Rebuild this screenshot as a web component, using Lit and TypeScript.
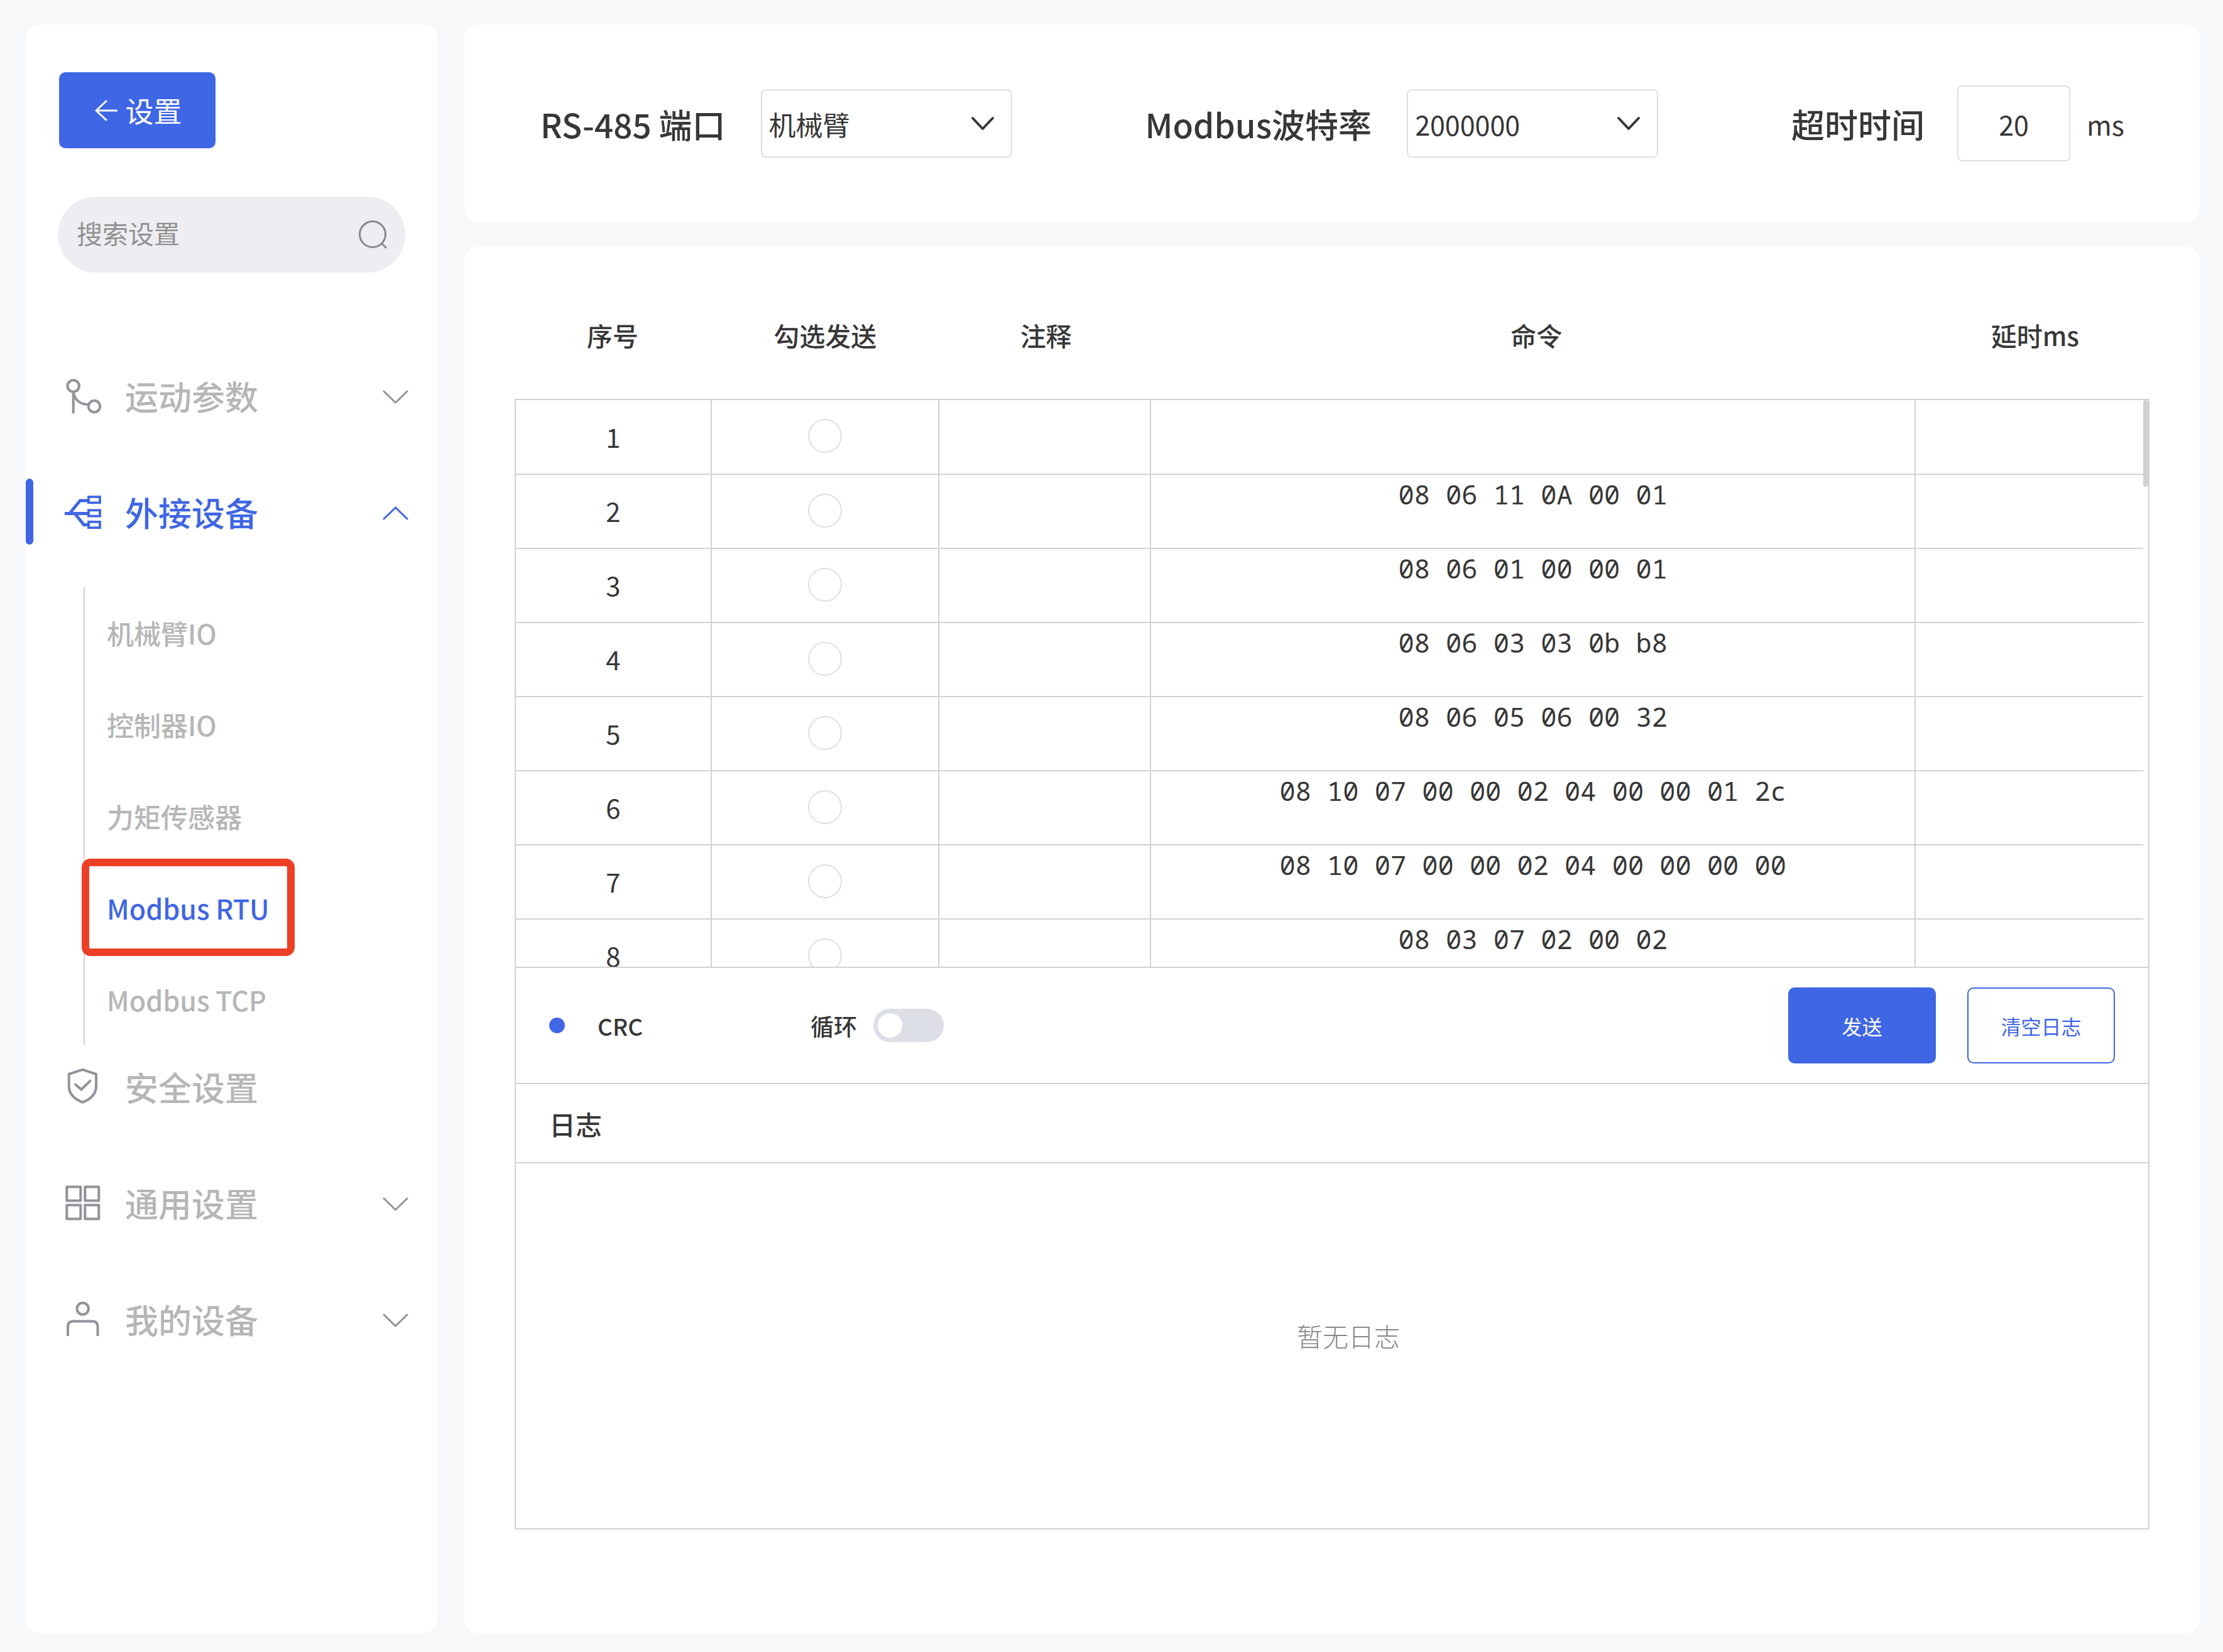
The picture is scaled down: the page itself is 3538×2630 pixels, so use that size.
import { LitElement, html, css, svg, nothing } from "lit";
import { customElement, property } from "lit/decorators.js";
import { classMap } from "lit/directives/class-map.js";

const ICONS: Record<string, unknown> = {
  motion: svg`<g fill="none" stroke="currentColor" stroke-width="4" stroke-linecap="round">
    <circle cx="12.7" cy="12.5" r="9.2"/><circle cx="46" cy="45" r="9.2"/>
    <path d="M12.7 22V54.500M13 24C16 36 25 42 36 42"/></g>`,
  device: svg`<g fill="none" stroke="currentColor">
    <path stroke-width="5" d="M-1 30.500H36M7.500 29.500 23.500 10H36M15.500 31 29.500 48.500H36"/>
    <g stroke-width="3.800"><rect x="37" y="4" width="18" height="9.300"/><rect x="37" y="25.300" width="18" height="9.300"/><rect x="37" y="43.800" width="18" height="9.300"/></g></g>`,
  shield: svg`<g fill="none" stroke="currentColor" stroke-width="4" stroke-linejoin="round">
    <path d="M27.500 0.800 49 8V27C49 40 40 48 27.500 52.800C15 48 5.700 40 5.700 27V8Z"/>
    <path stroke-linecap="round" stroke-linejoin="miter" d="M16 24.500 25.500 32.500 39.300 18.800"/></g>`,
  grid: svg`<g fill="none" stroke="currentColor" stroke-width="4" stroke-linejoin="round">
    <rect x="2.300" y="2.500" width="22" height="22"/><rect x="31.300" y="2.500" width="22" height="22"/>
    <rect x="2.300" y="31.500" width="22" height="22"/><rect x="31.300" y="31.500" width="22" height="22"/></g>`,
  user: svg`<g fill="none" stroke="currentColor" stroke-width="4">
    <circle cx="27.700" cy="11.500" r="9.200"/><path d="M4 55V40Q4 31.500 12.500 31.500H43Q51.500 31.500 51.500 40V55"/></g>`,
};

interface MenuEntry {
  label: string;
  icon: string;
  chevron?: "up" | "down";
  children?: string[];
}

const MENU: MenuEntry[] = [
  { label: "运动参数", icon: "motion", chevron: "down" },
  {
    label: "外接设备",
    icon: "device",
    chevron: "up",
    children: ["机械臂IO", "控制器IO", "力矩传感器", "Modbus RTU", "Modbus TCP"],
  },
  { label: "安全设置", icon: "shield" },
  { label: "通用设置", icon: "grid", chevron: "down" },
  { label: "我的设备", icon: "user", chevron: "down" },
];

const COMMANDS = [
  "",
  "08 06 11 0A 00 01",
  "08 06 01 00 00 01",
  "08 06 03 03 0b b8",
  "08 06 05 06 00 32",
  "08 10 07 00 00 02 04 00 00 01 2c",
  "08 10 07 00 00 02 04 00 00 00 00",
  "08 03 07 02 00 02",
];

const base = css`
  :host {
    display: block;
    font-family: "Noto Sans CJK SC", sans-serif;
    color: #373737;
  }
  *,
  *::before,
  *::after {
    box-sizing: border-box;
  }
  button,
  input,
  select,
  textarea {
    font: inherit;
    color: inherit;
    margin: 0;
    padding: 0;
    border: 0;
    background: none;
    outline: 0;
    appearance: none;
  }
`;

@customElement("settings-menu")
export class SettingsMenu extends LitElement {
  @property() group = "外接设备";
  @property() current = "Modbus RTU";

  static styles = [
    base,
    css`
      :host {
        background: #fff;
        border-radius: 22px;
        padding: 76px 0;
      }
      .back {
        display: flex;
        align-items: center;
        justify-content: center;
        gap: 12px;
        width: 249px;
        height: 121px;
        margin-left: 53px;
        padding-left: 4px;
        border-radius: 10px;
        background: #3f66e4;
        color: #fff;
        font-size: 45px;
      }
      .search {
        display: flex;
        align-items: center;
        height: 121px;
        margin: 77px 51px 143px;
        padding: 0 27px 0 30px;
        border-radius: 61px;
        background: #eeedf2;
        color: #888;
        font-size: 41px;
      }
      .query {
        flex: 1;
        min-width: 0;
        padding-bottom: 8px;
      }
      .query::placeholder {
        color: #919191;
        opacity: 1;
      }
      .groups {
        display: flex;
        flex-direction: column;
        gap: 80px;
      }
      .entry {
        display: flex;
        align-items: center;
        width: 100%;
        height: 105px;
        padding: 0 45px 0 63px;
        color: #b6b6b6;
        font-size: 53px;
        font-weight: 500;
        text-align: left;
        position: relative;
      }
      .entry.active {
        color: #3f66e4;
      }
      .entry.active::before {
        content: "";
        position: absolute;
        left: 0;
        top: 0;
        bottom: 0;
        width: 12px;
        border-radius: 6px;
        background: #3f66e4;
      }
      .icon {
        width: 58px;
        height: 56px;
        overflow: visible;
        color: #92929a;
      }
      .active .icon,
      .active .chevron {
        color: inherit;
      }
      .name {
        flex: 1;
        margin-left: 37px;
      }
      .chevron {
        margin-top: 4px;
        color: #92929a;
      }
      .sub {
        list-style: none;
        margin: 67px 0 -67px 92px;
        padding: 0;
        border-left: 2px solid #d2d2d2;
      }
      .link {
        display: flex;
        align-items: center;
        width: 100%;
        height: 146px;
        padding-left: 35px;
        color: #b6b6b6;
        font-size: 43px;
        font-weight: 500;
        text-decoration: none;
      }
      .item {
        position: relative;
      }
      .link.on {
        color: #3f66e4;
      }
      .item.on::after {
        content: "";
        position: absolute;
        left: -5px;
        top: -5px;
        width: 339px;
        height: 155px;
        border: 12px solid #ec4026;
        border-radius: 14px;
        pointer-events: none;
      }
    `,
  ];

  private entry(e: MenuEntry) {
    const active = e.label === this.group;
    return html`
      <div class="group">
        <button class=${classMap({ entry: true, active })} type="button">
          <svg class="icon" viewBox="0 0 58 56" aria-hidden="true">${ICONS[e.icon]}</svg>
          <span class="name">${e.label}</span>
          ${e.chevron
            ? html`<svg class="chevron" width="42" height="24" viewBox="0 0 42 24" aria-hidden="true">
                <path
                  d=${e.chevron === "down" ? "M2 3 20.500 21 39 3" : "M2 21 20.500 3 39 21"}
                  fill="none"
                  stroke="currentColor"
                  stroke-width="3"
                  stroke-linecap="round"
                  stroke-linejoin="round"
                />
              </svg>`
            : nothing}
        </button>
        ${e.children
          ? html`<ul class="sub">
              ${e.children.map((c) => {
                const on = c === this.current;
                return html`<li class=${classMap({ item: true, on })}>
                  <a class=${classMap({ link: true, on })} href="#">${c}</a>
                </li>`;
              })}
            </ul>`
          : nothing}
      </div>
    `;
  }

  render() {
    return html`
      <button class="back" type="button">
        <svg width="36" height="34" viewBox="0 0 36 34" aria-hidden="true">
          <path d="M18 2 2 17 18 32M2 17H35" fill="none" stroke="currentColor" stroke-width="3" stroke-linecap="round" stroke-linejoin="round" />
        </svg>
        设置
      </button>
      <label class="search">
        <input class="query" type="text" placeholder="搜索设置" aria-label="搜索设置" />
        <svg width="48" height="48" viewBox="0 0 48 48" aria-hidden="true">
          <g fill="none" stroke="currentColor" stroke-width="3" stroke-linecap="round">
            <circle cx="23" cy="23" r="20.500" />
            <path d="M38 38 44 44" />
          </g>
        </svg>
      </label>
      <nav class="groups">${MENU.map((e) => this.entry(e))}</nav>
    `;
  }
}

@customElement("port-bar")
export class PortBar extends LitElement {
  static styles = [
    base,
    css`
      :host {
        display: flex;
        align-items: center;
        justify-content: space-between;
        height: 315px;
        padding: 0 120px 0 121px;
        background: #fff;
        border-radius: 22px;
        font-size: 43px;
      }
      .field {
        display: flex;
        align-items: center;
      }
      .label {
        font-size: 53px;
        font-weight: 500;
        margin-right: 52px;
      }
      .label.wide {
        margin-right: 56px;
      }
      .picker {
        display: grid;
        align-items: center;
        width: 400px;
        height: 109px;
        border: 2px solid #dcdfe6;
        border-radius: 8px;
      }
      .choice {
        grid-area: 1 / 1;
        width: 100%;
        height: 100%;
        padding-left: 11px;
      }
      .arrow {
        grid-area: 1 / 1;
        justify-self: end;
        margin-right: 26px;
        pointer-events: none;
      }
      .number {
        width: 180px;
        height: 121px;
        border: 2px solid #dcdfe6;
        border-radius: 8px;
        text-align: center;
      }
      .unit {
        margin-left: 26px;
      }
    `,
  ];

  private picker(id: string, label: string, value: string) {
    return html`
      <div class="field">
        <label class="label wide" for=${id}>${label}</label>
        <div class="picker">
          <select class="choice" id=${id}>
            <option>${value}</option>
          </select>
          <svg class="arrow" width="38" height="24" viewBox="0 0 38 24" aria-hidden="true">
            <path d="M3 3 19 20 35 3" fill="none" stroke="currentColor" stroke-width="4" stroke-linecap="round" stroke-linejoin="round" />
          </svg>
        </div>
      </div>
    `;
  }

  render() {
    return html`
      ${this.picker("port", "RS-485 端口", "机械臂")} ${this.picker("baud", "Modbus波特率", "2000000")}
      <div class="field">
        <label class="label" for="timeout">超时时间</label>
        <input class="number" id="timeout" type="text" inputmode="numeric" value="20" />
        <span class="unit">ms</span>
      </div>
    `;
  }
}

@customElement("command-panel")
export class CommandPanel extends LitElement {
  static styles = [
    base,
    css`
      :host {
        display: flex;
        flex-direction: column;
        padding: 0 80px 165px 80px;
        background: #fff;
        border-radius: 22px;
        font-size: 42px;
      }
      .grid {
        width: 100%;
        border-collapse: collapse;
        table-layout: fixed;
      }
      .c1 {
        width: 12%;
      }
      .c2 {
        width: 14%;
      }
      .c3 {
        width: 13%;
      }
      .c4 {
        width: 47%;
      }
      .c5 {
        width: 14%;
      }
      .head {
        height: 242px;
        padding: 38px 0 0;
        font-size: 41px;
        font-weight: 500;
        text-align: center;
        vertical-align: middle;
      }
      .frame {
        flex: 1;
        display: flex;
        flex-direction: column;
        border: 2px solid #d2d2d2;
      }
      .scroller {
        display: flex;
        height: 902px;
        overflow: hidden;
      }
      .rows {
        flex: 1;
      }
      .track {
        width: 8px;
      }
      .thumb {
        height: 138px;
        border-radius: 4px;
        background: #d0d0d0;
      }
      .row {
        height: 118px;
      }
      .cell {
        height: 118px;
        padding: 0 0 3px;
        border-bottom: 2px solid #d2d2d2;
        border-left: 2px solid #d2d2d2;
        text-align: center;
        vertical-align: middle;
      }
      .cell:first-child {
        border-left: 0;
      }
      .pick {
        display: block;
        width: 54px;
        height: 54px;
        margin: 0 auto;
        border: 2px solid #dcdfe6;
        border-radius: 50%;
      }
      .text {
        display: block;
        width: 100%;
        height: 112px;
        text-align: center;
      }
      .command {
        display: block;
        width: 100%;
        height: 112px;
        padding: 5px 0;
        font-family: "Noto Sans Mono", "DejaVu Sans Mono", monospace;
        font-size: 42px;
        line-height: 50px;
        text-align: center;
        resize: none;
        overflow: hidden;
      }
      .actions {
        display: flex;
        align-items: center;
        height: 187px;
        padding: 0 53px;
        border-top: 2px solid #d2d2d2;
        border-bottom: 2px solid #d2d2d2;
        font-size: 37px;
        font-weight: 500;
      }
      .crc {
        display: flex;
        align-items: center;
        gap: 52px;
      }
      .dot {
        width: 25px;
        height: 25px;
        border: 2px solid #3f66e4;
        border-radius: 50%;
      }
      .dot:checked {
        background: #3f66e4;
      }
      .loop {
        display: flex;
        align-items: center;
        gap: 26px;
        margin: 0 auto 0 267px;
      }
      .switch {
        display: flex;
        align-items: center;
        width: 112px;
        height: 53px;
        padding: 0 7px;
        border-radius: 27px;
        background: #dcdfe6;
      }
      .switch::before {
        content: "";
        width: 39px;
        height: 39px;
        border-radius: 50%;
        background: #fff;
      }
      .button {
        width: 235px;
        height: 121px;
        border: 2px solid #3f66e4;
        border-radius: 10px;
        color: #3f66e4;
        font-size: 32px;
        font-weight: 400;
      }
      .button.primary {
        margin-right: 50px;
        background: #3f66e4;
        color: #fff;
      }
      .title {
        height: 126px;
        margin: 0;
        padding-left: 53px;
        border-bottom: 2px solid #d2d2d2;
        font-size: 42px;
        line-height: 126px;
        font-weight: 500;
      }
      .log {
        flex: 1;
        display: flex;
        align-items: center;
        justify-content: center;
        padding: 0 0 34px 52px;
        color: #888;
        font-size: 41px;
        font-weight: 300;
      }
    `,
  ];

  private columns() {
    return html`<colgroup>
      <col class="c1" />
      <col class="c2" />
      <col class="c3" />
      <col class="c4" />
      <col class="c5" />
    </colgroup>`;
  }

  render() {
    return html`
      <table class="grid">
        ${this.columns()}
        <thead>
          <tr>
            ${["序号", "勾选发送", "注释", "命令", "延时ms"].map((t) => html`<th class="head" scope="col">${t}</th>`)}
          </tr>
        </thead>
      </table>
      <div class="frame">
        <div class="scroller">
          <div class="rows">
            <table class="grid">
              ${this.columns()}
              <tbody>
                ${COMMANDS.map(
                  (command, i) => html`<tr class="row">
                    <td class="cell">${i + 1}</td>
                    <td class="cell"><input class="pick" type="checkbox" aria-label="勾选发送 ${i + 1}" /></td>
                    <td class="cell"><input class="text" type="text" aria-label="注释 ${i + 1}" /></td>
                    <td class="cell">
                      <textarea class="command" aria-label="命令 ${i + 1}" spellcheck="false" .value=${command}></textarea>
                    </td>
                    <td class="cell"><input class="text" type="text" aria-label="延时ms ${i + 1}" /></td>
                  </tr>`,
                )}
              </tbody>
            </table>
          </div>
          <div class="track"><div class="thumb"></div></div>
        </div>
        <div class="actions">
          <label class="crc"><input class="dot" type="checkbox" checked />CRC</label>
          <label class="loop">循环<input class="switch" type="checkbox" role="switch" /></label>
          <button class="button primary" type="button">发送</button>
          <button class="button" type="button">清空日志</button>
        </div>
        <h2 class="title">日志</h2>
        <div class="log">暂无日志</div>
      </div>
    `;
  }
}

@customElement("app-root")
export class AppRoot extends LitElement {
  static styles = [
    base,
    css`
      :host {
        min-height: 100vh;
        background: #f7f8fa;
      }
      .page {
        display: grid;
        grid-template-columns: 655px 1fr;
        gap: 43px;
        min-height: 100vh;
        padding: 39px 37px 30px 41px;
      }
      .main {
        display: flex;
        flex-direction: column;
        gap: 39px;
      }
      .panel {
        flex: 1;
      }
    `,
  ];

  render() {
    return html`
      <div class="page">
        <settings-menu></settings-menu>
        <main class="main">
          <port-bar></port-bar>
          <command-panel class="panel"></command-panel>
        </main>
      </div>
    `;
  }
}
